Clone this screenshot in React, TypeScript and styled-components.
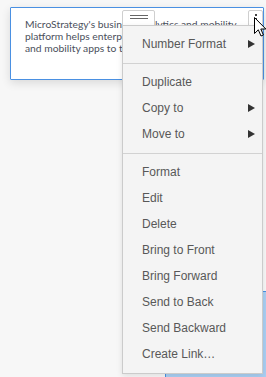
import React from "react";
import styled, { createGlobalStyle } from "styled-components";

const GlobalStyle = createGlobalStyle`
  html, body { margin: 0; padding: 0; background: #f7f7f7; overflow: hidden; }
  * { box-sizing: border-box; }
`;

const Canvas = styled.div`
  position: relative;
  width: 266px;
  height: 377px;
  background: #f7f7f7;
  overflow: hidden;
`;

const Card = styled.div`
  position: absolute;
  left: 10px;
  top: 7px;
  width: 254px;
  height: 73px;
  background: #ffffff;
  border: 1px solid #4a90e2;
  border-radius: 1px;
  box-shadow: 0 3px 10px rgba(0, 0, 0, 0.12);
  padding: 10px 14px;
  overflow: hidden;
`;

const CardText = styled.div`
  font-family: Lato, "Open Sans", "Liberation Sans", sans-serif;
  font-size: 10.3px;
  line-height: 12px;
  color: #4b4f5c;
  white-space: nowrap;
`;

const BackShape = styled.div`
  position: absolute;
  left: 165px;
  top: 291px;
  width: 140px;
  height: 120px;
  background: #a9cff3;
  border: 1px solid #4a90e2;
`;

const Handle = styled.div`
  position: absolute;
  left: 122px;
  top: 10px;
  width: 33px;
  height: 20px;
  background: #ffffff;
  border: 1px solid #cfcfcf;
  border-radius: 2px;
  display: flex;
  flex-direction: column;
  align-items: center;
  padding-top: 4px;
  gap: 2px;
`;

const HandleLine = styled.span`
  display: block;
  width: 18px;
  height: 1px;
  background: #666;
`;

const MoreButton = styled.div`
  position: absolute;
  left: 248px;
  top: 10px;
  width: 15px;
  height: 17px;
  background: #ffffff;
  border: 1px solid #cfcfcf;
  border-radius: 2px;
  display: flex;
  flex-direction: column;
  align-items: center;
  padding-top: 3px;
  gap: 2px;
`;

const Dot = styled.span`
  display: block;
  width: 2px;
  height: 2px;
  background: #444;
`;

const Menu = styled.div`
  position: absolute;
  left: 122px;
  top: 25px;
  width: 141px;
  background: #f4f4f4;
  border: 1px solid #cbcbcb;
  box-shadow: 0 2px 6px rgba(0, 0, 0, 0.1);
  display: flex;
  flex-direction: column;
`;

const Group = styled.div`
  display: flex;
  flex-direction: column;
  padding: 5px 0 6px;
`;

const Separator = styled.div`
  height: 1px;
  background: #d2d2d2;
`;

const Item = styled.div`
  height: 26px;
  display: flex;
  align-items: center;
  justify-content: space-between;
  padding: 0 7px 0 19px;
  font-family: "Liberation Sans", Arial, sans-serif;
  font-size: 12px;
  color: #585858;
`;

const Arrow = styled.span`
  width: 0;
  height: 0;
  border-top: 4px solid transparent;
  border-bottom: 4px solid transparent;
  border-left: 7px solid #333333;
`;

const Cursor = styled.svg`
  position: absolute;
  left: 254px;
  top: 17px;
`;

type Entry = { label: string; sub?: boolean };

const groups: Entry[][] = [
  [{ label: "Number Format", sub: true }],
  [
    { label: "Duplicate" },
    { label: "Copy to", sub: true },
    { label: "Move to", sub: true },
  ],
  [
    { label: "Format" },
    { label: "Edit" },
    { label: "Delete" },
    { label: "Bring to Front" },
    { label: "Bring Forward" },
    { label: "Send to Back" },
    { label: "Send Backward" },
    { label: "Create Link\u2026" },
  ],
];

export default function App() {
  return (
    <>
      <GlobalStyle />
      <Canvas>
        <BackShape />
        <Card>
          <CardText>MicroStrategy's business analytics and mobility</CardText>
          <CardText>platform helps enterprises build and deploy analytics</CardText>
          <CardText>and mobility apps to transform their business.</CardText>
        </Card>
        <Handle>
          <HandleLine />
          <HandleLine />
        </Handle>
        <MoreButton>
          <Dot />
          <Dot />
          <Dot />
        </MoreButton>
        <Menu>
          {groups.map((g, gi) => (
            <React.Fragment key={gi}>
              {gi > 0 && <Separator />}
              <Group>
                {g.map((e) => (
                  <Item key={e.label}>
                    <span>{e.label}</span>
                    {e.sub && <Arrow />}
                  </Item>
                ))}
              </Group>
            </React.Fragment>
          ))}
        </Menu>
        <Cursor width="13" height="21" viewBox="0 0 13 21">
          <path
            d="M0.5 0.5 L0.5 16.5 L4.3 12.8 L7 19 L9.4 18 L6.8 12 L11.8 12 Z"
            fill="#ffffff"
            stroke="#000000"
            strokeWidth="1"
            strokeLinejoin="miter"
          />
        </Cursor>
      </Canvas>
    </>
  );
}
